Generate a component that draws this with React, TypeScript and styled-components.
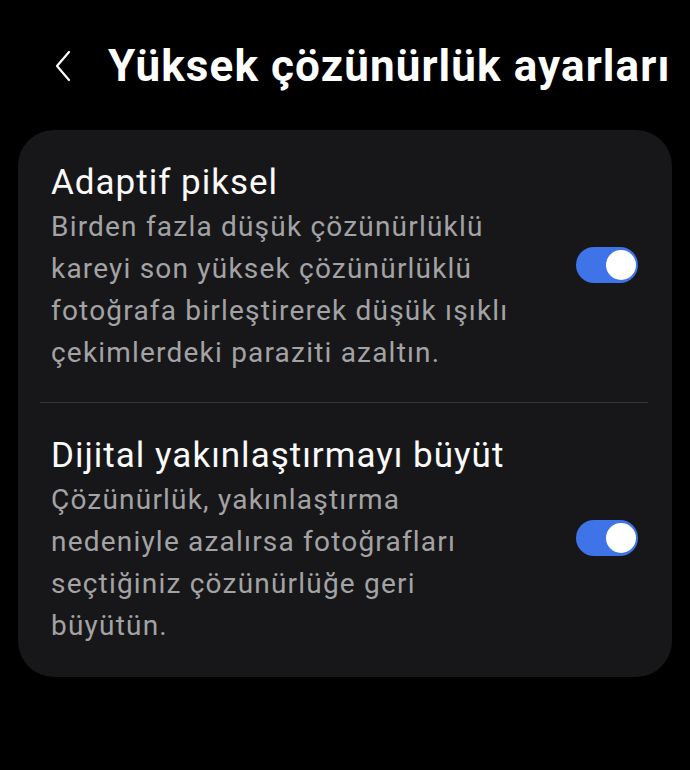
import styled, { createGlobalStyle } from "styled-components";

const GlobalStyle = createGlobalStyle`
    html, body {
        margin: 0;
        padding: 0;
        background: #000;
    }
    body {
        font-family: Roboto, "Noto Sans", sans-serif;
        width: 690px;
        height: 770px;
        overflow: hidden;
    }
`

const Screen = styled.div`
    background: #000;
    min-height: 770px;
    padding: 0 18px;
    box-sizing: border-box;
`

const Header = styled.header`
    display: flex;
    align-items: center;
    height: 130px;
    padding: 2px 0 0 36px;
    box-sizing: border-box;
`

const BackButton = styled.button`
    background: none;
    border: none;
    padding: 0;
    margin-right: 36px;
    display: flex;
    align-items: center;
    cursor: pointer;
`

const Title = styled.h1`
    margin: 0;
    color: #fff;
    font-size: 44px;
    font-weight: 700;
    letter-spacing: 1.1px;
    white-space: nowrap;
`

const Card = styled.section`
    background: #171719;
    border-radius: 36px;
    padding: 22px 33px 10px 33px;
`

const Row = styled.div`
    display: flex;
    align-items: center;
    padding: 10px 0 20px;
`

const RowText = styled.div`
    flex: 1;
`

const RowTitle = styled.div`
    color: #fafafa;
    font-size: 35px;
    letter-spacing: 1px;
    line-height: 42px;
    margin-bottom: 2px;
`

const RowDesc = styled.div`
    color: #a3a3a5;
    font-size: 28px;
    letter-spacing: 1.2px;
    line-height: 42px;
    max-width: 470px;
`

const Divider = styled.hr`
    border: none;
    height: 1px;
    background: #343436;
    margin: 8px -9px 22px -11px;
`

const Switch = styled.div<{ $on: boolean }>`
    flex-shrink: 0;
    width: 62px;
    height: 36px;
    border-radius: 18px;
    background: ${p => (p.$on ? "#3e74e8" : "#555")};
    display: flex;
    align-items: center;
    justify-content: ${p => (p.$on ? "flex-end" : "flex-start")};
    padding: 0 2px;
    box-sizing: border-box;
    margin: 0 1px 6px 16px;
`

const Knob = styled.div`
    width: 30px;
    height: 30px;
    border-radius: 50%;
    background: #fff;
`

const settings = [
    {
        title: "Adaptif piksel",
        desc: "Birden fazla düşük çözünürlüklü kareyi son yüksek çözünürlüklü fotoğrafa birleştirerek düşük ışıklı çekimlerdeki paraziti azaltın.",
        on: true,
    },
    {
        title: "Dijital yakınlaştırmayı büyüt",
        desc: "Çözünürlük, yakınlaştırma nedeniyle azalırsa fotoğrafları seçtiğiniz çözünürlüğe geri büyütün.",
        on: true,
    },
]

export default function App() {
    return (
        <Screen>
            <GlobalStyle />
            <Header>
                <BackButton aria-label="Geri">
                    <svg width="18" height="32" viewBox="0 0 18 32">
                        <path d="M15 2 L3 16 L15 30" stroke="#fff" strokeWidth="2.2" fill="none" strokeLinecap="round" strokeLinejoin="round" />
                    </svg>
                </BackButton>
                <Title>Yüksek çözünürlük ayarları</Title>
            </Header>
            <Card>
                {settings.map((s, i) => (
                    <div key={s.title}>
                        {i > 0 && <Divider />}
                        <Row>
                            <RowText>
                                <RowTitle>{s.title}</RowTitle>
                                <RowDesc>{s.desc}</RowDesc>
                            </RowText>
                            <Switch $on={s.on}>
                                <Knob />
                            </Switch>
                        </Row>
                    </div>
                ))}
            </Card>
        </Screen>
    )
}
